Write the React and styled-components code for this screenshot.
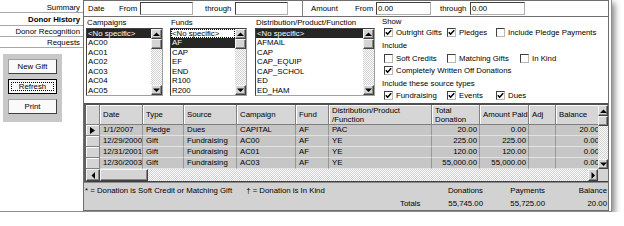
import React from 'react';
import styled, { createGlobalStyle, css } from 'styled-components';

const Global = createGlobalStyle`
  html, body { margin: 0; padding: 0; background: #fff; }
  body { font-family: "Liberation Sans", Arial, sans-serif; font-size: 7.8px; color: #000; }
  * { box-sizing: border-box; }
`;

const dither = css`
  background-color: #fff;
  background-image: repeating-conic-gradient(#fff 0 25%, #d0d0d0 0 50%);
  background-size: 2px 2px;
`;

const raised = css`
  background: #d4d4d4;
  border: 1px solid;
  border-color: #f4f4f4 #404040 #404040 #f4f4f4;
  box-shadow: inset -1px -1px 0 #888;
`;

const Frame = styled.div`
  display: flex;
  width: 612px;
  height: 212px;
  background: #fff;
  border-right: 1px solid #8c8c8c;
  border-bottom: 1px solid #8c8c8c;
  box-shadow: 3px 3px 6px rgba(0, 0, 0, 0.45);
`;

const Nav = styled.div`
  width: 83px;
  display: flex;
  flex-direction: column;
  padding-top: 2px;
`;

const Tab = styled.div`
  height: ${p => (p.$active ? 13 : 11)}px;
  line-height: ${p => (p.$active ? 13 : 11)}px;
  text-align: right;
  padding-right: 3px;
  border-bottom: 1px solid #a8a8a8;
  font-weight: ${p => (p.$active ? 'bold' : 'normal')};
  white-space: nowrap;
`;

const ButtonGroup = styled.div`
  margin: 6px 0 0 3px;
  width: 59px;
  height: 68px;
  background: #c8c8c8;
  padding: 5px 0 0 5px;
  display: flex;
  flex-direction: column;
  gap: 5px;
`;

const Button = styled.div`
  position: relative;
  width: 49px;
  height: 15px;
  line-height: 13px;
  text-align: center;
  background: #fafafa;
  border: 1px solid;
  border-color: ${p => (p.$default ? '#000' : '#a0a0a0 #404040 #404040 #a0a0a0')};
  ${p =>
    p.$default &&
    css`
      &::after {
        content: '';
        position: absolute;
        inset: 2px;
        border: 1px dotted #000;
      }
    `}
`;

const Main = styled.div`
  width: 526px;
  height: 211px;
  border: 1px solid #6e6e6e;
  display: flex;
  flex-direction: column;
`;

const DateRow = styled.div`
  height: 16px;
  border-bottom: 1px solid #6e6e6e;
  display: flex;
  align-items: center;
  padding-left: 4px;
`;

const Label = styled.span`
  display: inline-block;
  width: ${p => p.$w}px;
  margin-left: ${p => p.$ml || 0}px;
  white-space: nowrap;
`;

const Input = styled.div`
  width: ${p => p.$w}px;
  height: 13px;
  line-height: 11px;
  padding-left: 1px;
  background: #fff;
  border: 1px solid;
  border-color: #404040 #b0b0b0 #b0b0b0 #404040;
`;

const Sep = styled.div`
  width: 1px;
  height: 15px;
  background: #808080;
  margin: 0 8px 0 14px;
`;

const Filters = styled.div`
  height: 86px;
  display: flex;
  padding-left: 2px;
`;

const FilterCol = styled.div`
  width: ${p => p.$w}px;
  margin-right: ${p => p.$mr}px;
  display: flex;
  flex-direction: column;
`;

const ColLabel = styled.div`
  height: 11px;
  line-height: 11px;
  padding-left: 1px;
  white-space: nowrap;
`;

const ListBox = styled.div`
  height: 68px;
  display: flex;
  background: #fff;
  border: 1px solid;
  border-color: #404040 #a0a0a0 #a0a0a0 #404040;
`;

const Items = styled.div`
  flex: 1;
  overflow: hidden;
`;

const Item = styled.div`
  height: 9.45px;
  line-height: 9.45px;
  padding-left: 1px;
  white-space: nowrap;
  ${p =>
    p.$sel &&
    css`
      background: #262626;
      color: #fff;
    `}
  ${p =>
    p.$focus &&
    css`
      outline: 1px dotted #000;
      outline-offset: -1px;
    `}
`;

const VBar = styled.div`
  width: ${p => p.$w}px;
  display: flex;
  flex-direction: column;
  flex-shrink: 0;
`;

const SBtn = styled.div`
  ${raised};
  width: ${p => (p.$w ? `${p.$w}px` : 'auto')};
  height: ${p => (p.$h ? `${p.$h}px` : 'auto')};
  flex-shrink: 0;
  display: flex;
  align-items: center;
  justify-content: center;
`;

const Track = styled.div`
  flex: 1;
  ${dither};
`;

const Arrow = ({ dir }) => {
  const pts = {
    up: '0,4 3.5,0.5 7,4',
    down: '0,0.5 3.5,4 7,0.5',
    left: '4,0 0.5,3.5 4,7',
    right: '0.5,0 4,3.5 0.5,7',
  }[dir];
  const vert = dir === 'up' || dir === 'down';
  return (
    <svg width={vert ? 7 : 4} height={vert ? 4 : 7} viewBox={vert ? '0 0 7 4' : '0 0 4 7'}>
      <polygon points={pts} fill="#000" />
    </svg>
  );
};

const ListScroll = () => (
  <VBar $w={11}>
    <SBtn $h={10}><Arrow dir="up" /></SBtn>
    <SBtn $h={10} />
    <Track />
    <SBtn $h={10}><Arrow dir="down" /></SBtn>
  </VBar>
);

const Show = styled.div`
  display: flex;
  flex-direction: column;
  flex: 1;
`;

const SecLabel = styled.div`
  height: 10px;
  line-height: 10px;
  margin-top: ${p => p.$mt || 0}px;
  white-space: nowrap;
`;

const CheckRow = styled.div`
  height: 10px;
  display: flex;
  align-items: center;
  padding-left: 2px;
  margin-top: ${p => p.$mt || 0}px;
`;

const CheckItem = styled.div`
  width: ${p => (p.$w ? `${p.$w}px` : 'auto')};
  display: flex;
  align-items: center;
  white-space: nowrap;
`;

const Box = styled.div`
  width: 9px;
  height: 9px;
  margin-right: 3px;
  background: #fff;
  border: 1px solid;
  border-color: #404040 #b8b8b8 #b8b8b8 #404040;
  display: flex;
  align-items: center;
  justify-content: center;
  flex-shrink: 0;
`;

const Check = ({ label, checked, w }) => (
  <CheckItem $w={w}>
    <Box>
      {checked && (
        <svg width="7" height="7" viewBox="0 0 7 7">
          <polyline points="0.8,3.2 2.6,5.2 6.2,1.2" fill="none" stroke="#000" strokeWidth="1.5" />
        </svg>
      )}
    </Box>
    {label}
  </CheckItem>
);

const Grid = styled.div`
  display: flex;
  flex-direction: column;
  border-top: 2px solid #505050;
  border-left: 2px solid #606060;
  border-bottom: 1px solid #404040;
`;

const GridTop = styled.div`
  display: flex;
`;

const Body = styled.div`
  width: 512px;
  overflow: hidden;
`;

const Row = styled.div`
  display: flex;
  width: 520px;
`;

const HeadCell = styled.div`
  width: ${p => p.$w}px;
  height: 20px;
  flex-shrink: 0;
  background: #d6d6d6;
  border-right: 1px solid #808080;
  border-bottom: 1px solid #808080;
  box-shadow: inset 1px 1px 0 #fff;
  padding-left: 3px;
  display: flex;
  align-items: center;
  line-height: 9px;
  white-space: pre;
`;

const Cell = styled.div`
  width: ${p => p.$w}px;
  height: 11px;
  line-height: 10px;
  flex-shrink: 0;
  background: #c6c6c6;
  border-right: 1px solid #979797;
  border-bottom: 1px solid #e2e2e2;
  padding: 0 2px 0 3px;
  text-align: ${p => (p.$num ? 'right' : 'left')};
  white-space: nowrap;
  overflow: hidden;
`;

const SelCell = styled.div`
  width: ${p => p.$w}px;
  height: 11px;
  flex-shrink: 0;
  background: #d4d4d4;
  border-right: 1px solid #808080;
  border-bottom: 1px solid #808080;
  box-shadow: inset 1px 1px 0 #fff;
  display: flex;
  align-items: center;
  padding-left: 4px;
`;

const HBar = styled.div`
  height: 12px;
  display: flex;
`;

const Corner = styled.div`
  width: 10px;
  background: #d4d4d4;
`;

const Footer = styled.div`
  flex: 1;
  background: #d2d2d2;
  border-top: 1px solid #8a8a8a;
  display: flex;
  flex-direction: column;
  padding: 0 1px;
`;

const FootRow = styled.div`
  height: 13px;
  line-height: 13px;
  display: flex;
  margin-top: ${p => p.$mt || 0}px;
  white-space: nowrap;
`;

const Legend = styled.div`
  flex: 1;
`;

const Dagger = styled.span`
  margin-left: 14px;
`;

const Spacer = styled.div`
  flex: 1;
`;

const SumCell = styled.div`
  width: ${p => p.$w}px;
  text-align: ${p => (p.$left ? 'left' : 'right')};
`;

const widths = [14, 43, 41, 53, 59, 33, 103, 48, 49, 27, 46];
const heads = ['', 'Date', 'Type', 'Source', 'Campaign', 'Fund', 'Distribution/Product\n/Function', 'Total\nDonation', 'Amount Paid', 'Adj', 'Balance'];
const rows = [
  ['1/1/2007', 'Pledge', 'Dues', 'CAPITAL', 'AF', 'PAC', '20.00', '0.00', '', '20.00'],
  ['12/29/2000', 'Gift', 'Fundraising', 'AC00', 'AF', 'YE', '225.00', '225.00', '', '0.00'],
  ['12/31/2001', 'Gift', 'Fundraising', 'AC01', 'AF', 'YE', '120.00', '120.00', '', '0.00'],
  ['12/30/2003', 'Gift', 'Fundraising', 'AC03', 'AF', 'YE', '55,000.00', '55,000.00', '', '0.00'],
];
const numCols = new Set([6, 7, 8, 9]);

const lists = [
  { label: 'Campaigns', w: 77, mr: 7, items: ['<No specific>', 'AC00', 'AC01', 'AC02', 'AC03', 'AC04', 'AC05'], sel: 0 },
  { label: 'Funds', w: 77, mr: 8, items: ['<No specific>', 'AF', 'CAP', 'EF', 'END', 'R100', 'R200'], sel: 1, focus: 0 },
  { label: 'Distribution/Product/Function', w: 120, mr: 7, items: ['<No specific>', 'AFMAIL', 'CAP', 'CAP_EQUIP', 'CAP_SCHOL', 'ED', 'ED_HAM'], sel: 0 },
];

export default function App() {
  return (
    <>
      <Global />
      <Frame>
        <Nav>
          <Tab>Summary</Tab>
          <Tab $active>Donor History</Tab>
          <Tab>Donor Recognition</Tab>
          <Tab>Requests</Tab>
          <ButtonGroup>
            <Button>New Gift</Button>
            <Button $default>Refresh</Button>
            <Button>Print</Button>
          </ButtonGroup>
        </Nav>
        <Main>
          <DateRow>
            <Label $w={31}>Date</Label>
            <Label $w={21}>From</Label>
            <Input $w={53} />
            <Label $w={30} $ml={12}>through</Label>
            <Input $w={53} />
            <Sep />
            <Label $w={44}>Amount</Label>
            <Label $w={21}>From</Label>
            <Input $w={55}>0.00</Input>
            <Label $w={30} $ml={9}>through</Label>
            <Input $w={55}>0.00</Input>
          </DateRow>
          <Filters>
            {lists.map(l => (
              <FilterCol key={l.label} $w={l.w} $mr={l.mr}>
                <ColLabel>{l.label}</ColLabel>
                <ListBox>
                  <Items>
                    {l.items.map((it, i) => (
                      <Item key={it} $sel={i === l.sel} $focus={i === l.focus}>{it}</Item>
                    ))}
                  </Items>
                  <ListScroll />
                </ListBox>
              </FilterCol>
            ))}
            <Show>
              <SecLabel>Show</SecLabel>
              <CheckRow>
                <Check w={63} checked label="Outright Gifts" />
                <Check w={49} checked label="Pledges" />
                <Check label="Include Pledge Payments" />
              </CheckRow>
              <SecLabel $mt={4}>Include</SecLabel>
              <CheckRow $mt={2}>
                <Check w={63} label="Soft Credits" />
                <Check w={73} label="Matching Gifts" />
                <Check label="In Kind" />
              </CheckRow>
              <CheckRow $mt={2}>
                <Check checked label="Completely Written Off Donations" />
              </CheckRow>
              <SecLabel $mt={4}>Include these source types</SecLabel>
              <CheckRow $mt={1}>
                <Check w={63} checked label="Fundraising" />
                <Check w={49} checked label="Events" />
                <Check checked label="Dues" />
              </CheckRow>
            </Show>
          </Filters>
          <Grid>
            <GridTop>
              <Body>
                <Row>
                  {heads.map((h, i) => (
                    <HeadCell key={i} $w={widths[i]}>{h}</HeadCell>
                  ))}
                </Row>
                {rows.map((r, ri) => (
                  <Row key={ri}>
                    <SelCell $w={widths[0]}>
                      {ri === 0 && (
                        <svg width="5" height="7" viewBox="0 0 5 7">
                          <polygon points="0,0 5,3.5 0,7" fill="#000" />
                        </svg>
                      )}
                    </SelCell>
                    {r.map((c, ci) => (
                      <Cell key={ci} $w={widths[ci + 1]} $num={numCols.has(ci)}>{c}</Cell>
                    ))}
                  </Row>
                ))}
              </Body>
              <VBar $w={10}>
                <SBtn $h={11}><Arrow dir="up" /></SBtn>
                <SBtn $h={10} />
                <Track />
                <SBtn $h={10}><Arrow dir="down" /></SBtn>
              </VBar>
            </GridTop>
            <HBar>
              <SBtn $w={14}><Arrow dir="left" /></SBtn>
              <SBtn $w={48} />
              <Track />
              <SBtn $w={10}><Arrow dir="right" /></SBtn>
              <Corner />
            </HBar>
          </Grid>
          <Footer>
            <FootRow $mt={1}>
              <Legend>
                * = Donation is Soft Credit or Matching Gift<Dagger>† = Donation is In Kind</Dagger>
              </Legend>
              <SumCell $w={62}>Donations</SumCell>
              <SumCell $w={62}>Payments</SumCell>
              <SumCell $w={62}>Balance</SumCell>
            </FootRow>
            <FootRow>
              <Spacer />
              <SumCell $w={21} $left>Totals</SumCell>
              <SumCell $w={62}>55,745.00</SumCell>
              <SumCell $w={62}>55,725.00</SumCell>
              <SumCell $w={62}>20.00</SumCell>
            </FootRow>
          </Footer>
        </Main>
      </Frame>
    </>
  );
}
